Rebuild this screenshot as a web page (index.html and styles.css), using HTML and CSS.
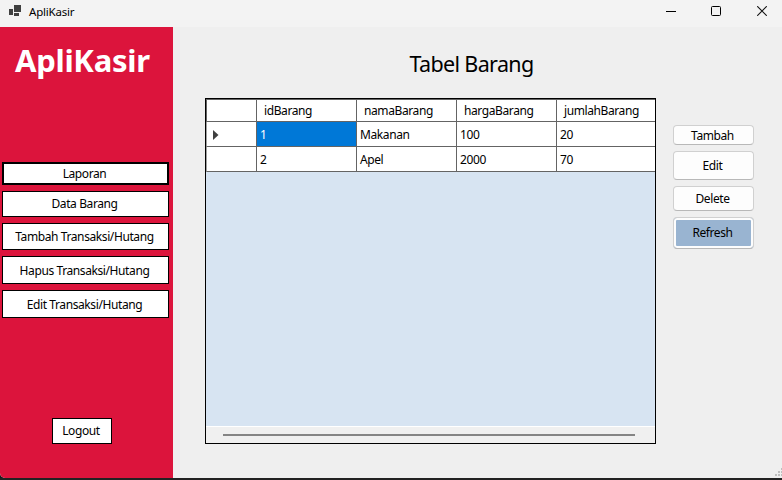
FILE: index.html
```
<!DOCTYPE html>
<html lang="id">
<head>
<meta charset="utf-8">
<title>ApliKasir</title>
<link rel="stylesheet" href="styles.css">
</head>
<body>
<div class="window">
  <header class="titlebar">
    <svg class="app-icon" width="13" height="12" viewBox="0 0 13 12" shape-rendering="crispEdges"><path fill="#404040" d="M0 4h4v6H0zM5 0h7v7H5zM5 8h5v3H5z"/></svg>
    <span class="caption">ApliKasir</span>
    <div class="controls">
      <svg width="10" height="10" viewBox="0 0 10 10"><path d="M0 5.5h10" stroke="#000"/></svg>
      <svg width="10" height="10" viewBox="0 0 10 10"><rect x=".5" y=".5" width="9" height="9" rx="1" fill="none" stroke="#000"/></svg>
      <svg width="10" height="10" viewBox="0 0 10 10"><path d="M.2.2l9.6 9.6M9.8.2L.2 9.8" stroke="#111" stroke-width="1.1"/></svg>
    </div>
  </header>
  <div class="body">
    <nav class="sidebar">
      <h1 class="brand">ApliKasir</h1>
      <div class="menu">
        <button class="flat focused">Laporan</button>
        <button class="flat data">Data Barang</button>
        <button class="flat add">Tambah Transaksi/Hutang</button>
        <button class="flat tall">Hapus Transaksi/Hutang</button>
        <button class="flat tall">Edit Transaksi/Hutang</button>
      </div>
      <button class="flat logout">Logout</button>
    </nav>
    <main class="content">
      <section class="panel">
        <h2 class="heading">Tabel Barang</h2>
        <div class="grid">
          <div class="row head"><span class="cell"></span><span class="cell">idBarang</span><span class="cell">namaBarang</span><span class="cell">hargaBarang</span><span class="cell">jumlahBarang</span></div>
          <div class="row"><span class="cell marker"><svg width="6" height="10" viewBox="0 0 6 10"><path d="M0 0l5.5 5L0 10z" fill="#404040"/></svg></span><span class="cell selected">1</span><span class="cell">Makanan</span><span class="cell">100</span><span class="cell">20</span></div>
          <div class="row"><span class="cell"></span><span class="cell">2</span><span class="cell">Apel</span><span class="cell">2000</span><span class="cell">70</span></div>
          <div class="scroll"><div class="thumb"></div></div>
        </div>
      </section>
      <aside class="actions">
        <button class="act tambah">Tambah</button>
        <button class="act edit">Edit</button>
        <button class="act delete">Delete</button>
        <button class="act refresh">Refresh</button>
      </aside>
      <svg class="grip" width="7" height="8" viewBox="0 0 7 8" shape-rendering="crispEdges"><path fill="#bfbfbf" d="M6 0h1v2H6zM3 3h2v2H3zM6 3h1v2H6zM0 6h2v2H0zM3 6h2v2H3zM6 6h1v2H6z"/></svg>
    </main>
  </div>
</div>
</body>
</html>
```
FILE: styles.css
```
* { box-sizing: border-box; }
body {
  margin: 0;
  background: #18181b;
  color: #000;
  font: 12px/16px "Noto Sans", "Open Sans", sans-serif;
  letter-spacing: -0.4px;
}
button { font: inherit; letter-spacing: inherit; color: #000; margin: 0; padding: 0; white-space: nowrap; }
.window { width: 782px; height: 480px; display: flex; flex-direction: column; border-bottom: 2px solid #222; }
.titlebar { height: 27px; flex: none; display: flex; background: #f3f3f3; padding-left: 9px; }
.app-icon { margin: 5px 7px 0 0; }
.caption { margin-top: 4px; font-size: 11.5px; letter-spacing: -0.2px; }
.controls { margin: 6px 15px 0 auto; display: flex; gap: 35px; }
.controls svg:nth-child(-n+2) { margin-left: -1px; margin-right: 1px; }
.body { flex: 1; display: flex; background: #efefef; border-bottom-left-radius: 5px; overflow: hidden; }
.sidebar { width: 173px; background: #dc143c; display: flex; flex-direction: column; }
.brand { margin: 12px 0 0 15px; height: 43px; color: #fff; font-size: 31px; line-height: 43px; font-weight: 700; letter-spacing: -0.3px; }
.menu { display: flex; flex-direction: column; gap: 6px; margin: 80px 4px 0 2px; }
.flat { border: 1px solid #000; background: #fff; display: block; padding-right: 2px; }
.focused { height: 23px; border-width: 2px; }
.data { height: 26px; }
.add { height: 27px; padding-top: 1px; }
.tall { height: 28px; padding-top: 1px; }
.logout { width: 60px; height: 26px; margin: 100px 0 0 52px; }
.content { flex: 1; display: flex; position: relative; }
.panel { width: 451px; margin-left: 32px; }
.heading { margin: 22px 0 19px; padding-left: 82px; text-align: center; height: 30px; font-size: 21.5px; line-height: 30px; font-weight: 400; letter-spacing: -0.65px; }
.grid { height: 346px; border: 1px solid #000; background: #d7e4f2; display: flex; flex-direction: column; }
.row { height: 25px; display: grid; grid-template-columns: 51px 100px 100px 100px 98px; background: #fff; flex: none; }
.cell { border: solid #646464; border-width: 0 1px 1px 0; padding: 5px 3px 2px; overflow: hidden; white-space: nowrap; }
.cell:last-child { border-right: 0; }
.cell:first-child { border-left: 1px solid #a0a0a0; }
.head { height: 23px; border-top: 1px solid #646464; }
.head .cell { padding: 3px 7px; }
.head .cell:first-child { border-left-color: #646464; }
.marker.cell { padding: 8px 0 0 6px; line-height: 0; }
.selected { background: #0078d7; color: #fff; }
.scroll { height: 17px; margin-top: auto; border-top: 1px solid #fff; background: #f0f0f0; padding: 7px 20px 0 17px; }
.thumb { height: 2px; background: #858585; }
.actions { width: 81px; margin: 98px 0 0 17px; display: flex; flex-direction: column; gap: 6px; }
.act { border: 1px solid #d0d0d0; border-bottom-color: #b8b8b8; border-radius: 4px; background: #fdfdfd; padding-right: 2px; }
.tambah { height: 20px; padding-top: 1px; line-height: 17px; }
.edit { height: 29px; }
.delete { height: 25px; }
.refresh { height: 32px; background: #99b4d1; box-shadow: inset 0 0 0 2px #fdfdfd; }
.grip { position: absolute; right: 0; bottom: 2px; }
```
